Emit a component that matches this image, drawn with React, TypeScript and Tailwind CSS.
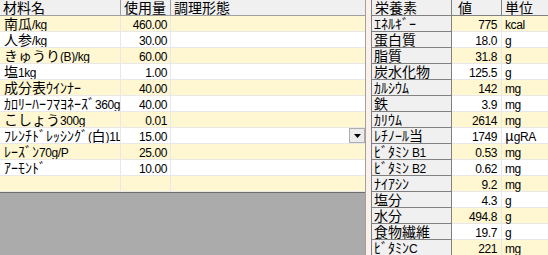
const font = { fontFamily: '"Noto Sans CJK JP", "Noto Sans", sans-serif' };
const latin = { fontFamily: '"Liberation Sans", Arial, sans-serif' };

type Ingredient = { name: string; amount: string };
type Nutrient = { name: string; value: string; unit: string };

const ingredients: Ingredient[] = [
  { name: "南瓜/kg", amount: "460.00" },
  { name: "人参/kg", amount: "30.00" },
  { name: "きゅうり(B)/kg", amount: "60.00" },
  { name: "塩1kg", amount: "1.00" },
  { name: "成分表ｳｲﾝﾅｰ", amount: "40.00" },
  { name: "ｶﾛﾘｰﾊｰﾌﾏﾖﾈｰｽﾞ360g", amount: "40.00" },
  { name: "こしょう300g", amount: "0.01" },
  { name: "ﾌﾚﾝﾁﾄﾞﾚｯｼﾝｸﾞ(白)1L", amount: "15.00" },
  { name: "ﾚｰｽﾞﾝ70g/P", amount: "25.00" },
  { name: "ｱｰﾓﾝﾄﾞ", amount: "10.00" },
  { name: "", amount: "" },
];

const nutrients: Nutrient[] = [
  { name: "ｴﾈﾙｷﾞｰ", value: "775", unit: "kcal" },
  { name: "蛋白質", value: "18.0", unit: "g" },
  { name: "脂質", value: "31.8", unit: "g" },
  { name: "炭水化物", value: "125.5", unit: "g" },
  { name: "ｶﾙｼｳﾑ", value: "142", unit: "mg" },
  { name: "鉄", value: "3.9", unit: "mg" },
  { name: "ｶﾘｳﾑ", value: "2614", unit: "mg" },
  { name: "ﾚﾁﾉｰﾙ当", value: "1749", unit: "μgRA" },
  { name: "ﾋﾞﾀﾐﾝ B1", value: "0.53", unit: "mg" },
  { name: "ﾋﾞﾀﾐﾝ B2", value: "0.62", unit: "mg" },
  { name: "ﾅｲｱｼﾝ", value: "9.2", unit: "mg" },
  { name: "塩分", value: "4.3", unit: "g" },
  { name: "水分", value: "494.8", unit: "g" },
  { name: "食物繊維", value: "19.7", unit: "g" },
  { name: "ﾋﾞﾀﾐﾝC", value: "221", unit: "mg" },
];

// ascii runs get a narrower latin face, the rest stays on the CJK font
function Txt({ s }: { s: string }) {
  const parts = s.match(/[\x20-\x7e]+|[^\x20-\x7e]+/g) ?? [];
  return (
    <>
      {parts.map((p, i) =>
        /^[\x20-\x7e]+$/.test(p) ? (
          <span key={i} className="text-[12px] tracking-[-0.4px]" style={latin}>
            {p}
          </span>
        ) : (
          <span key={i}>{p}</span>
        ),
      )}
    </>
  );
}

function IngredientGrid() {
  return (
    <div className="flex h-full w-[366px] shrink-0 flex-col border-r border-[#a0a0a0] bg-[#ababab]">
      <div className="flex h-4 shrink-0 border-b border-[#a0a0a0] bg-[#f0f0f0] leading-[15px]">
        <div className="w-[121px] border-r border-[#a0a0a0] pl-[3px]">材料名</div>
        <div className="w-[50px] border-r border-[#a0a0a0] pl-[3px]">使用量</div>
        <div className="flex-1 pl-[3px]">調理形態</div>
      </div>
      {ingredients.map((item, i) => (
        <div
          key={i}
          className={`flex h-4 shrink-0 border-b border-[#e8e8e8] leading-[15px] ${
            i % 2 === 0 ? "bg-[#fef7d2]" : "bg-white"
          }`}
        >
          <div className="w-[121px] overflow-hidden whitespace-nowrap border-r border-[#e8e8e8] pl-[4px]">
            <Txt s={item.name} />
          </div>
          <div className="w-[50px] whitespace-nowrap border-r border-[#e8e8e8] pr-[3px] text-right">
            <Txt s={item.amount} />
          </div>
          <div className="flex flex-1 justify-end">
            {i === 7 ? (
              <div className="flex h-[15px] w-4 items-center justify-center border border-[#adadad] bg-[#ececec]">
                <svg width="7" height="4" viewBox="0 0 7 4">
                  <polygon points="0,0 7,0 3.5,4" fill="#000" />
                </svg>
              </div>
            ) : null}
          </div>
        </div>
      ))}
      <div className="flex-1 border-t border-[#6e6e6e]" />
    </div>
  );
}

function NutrientGrid() {
  return (
    <div className="flex h-full flex-1 flex-col border-l border-[#808080] bg-white">
      <div className="flex h-4 shrink-0 border-b border-[#808080] bg-[#f0f0f0] leading-[15px]">
        <div className="w-[80px] border-r border-[#808080] pl-[3px]">栄養素</div>
        <div className="w-[50px] border-r border-[#808080] pl-[6px]">値</div>
        <div className="flex-1 pl-[3px]">単位</div>
      </div>
      {nutrients.map((n, i) => {
        const bg = i % 2 === 0 ? "bg-[#fef7d2]" : "bg-white";
        return (
          <div key={n.name} className="flex h-4 shrink-0 leading-[15px]">
            <div className="w-[80px] whitespace-nowrap border-b border-r border-[#808080] bg-[#f0f0f0] pl-[2px]">
              <Txt s={n.name} />
            </div>
            <div className={`w-[50px] whitespace-nowrap border-b border-r border-[#e8e8e8] pr-[4px] text-right ${bg}`}>
              <Txt s={n.value} />
            </div>
            <div className={`flex-1 whitespace-nowrap border-b border-[#e8e8e8] pl-[3px] ${bg}`}>
              <Txt s={n.unit} />
            </div>
          </div>
        );
      })}
    </div>
  );
}

export default function App() {
  return (
    <div
      className="flex h-[255px] w-[548px] overflow-hidden bg-white text-[14px] text-black"
      style={font}
    >
      <IngredientGrid />
      <div className="w-[5px] shrink-0 bg-[#fbf1ea]" />
      <NutrientGrid />
    </div>
  );
}
